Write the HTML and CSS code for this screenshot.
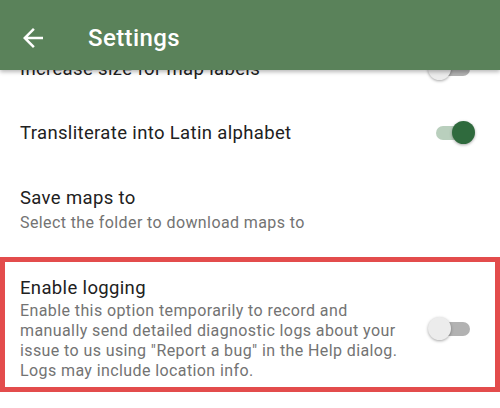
FILE: index.html
```html
<!DOCTYPE html>
<html>
<head>
<meta charset="utf-8">
<link rel="stylesheet" href="styles.css">
</head>
<body>
<header class="appbar">
  <svg class="back" viewBox="0 0 24 24" width="30" height="30"><path fill="#fff" d="M20 11H7.83l5.59-5.59L12 4l-8 8 8 8 1.41-1.41L7.83 13H20v-2z"/></svg>
  <span class="appbar-title">Settings</span>
</header>
<main class="list">
  <div class="row row-single first">
    <div class="text"><div class="title">Increase size for map labels</div></div>
    <div class="switch"><span class="track"></span><span class="thumb"></span></div>
  </div>
  <div class="row row-single">
    <div class="text"><div class="title">Transliterate into Latin alphabet</div></div>
    <div class="switch on"><span class="track"></span><span class="thumb"></span></div>
  </div>
  <div class="row row-double">
    <div class="text">
      <div class="title">Save maps to</div>
      <div class="summary">Select the folder to download maps to</div>
    </div>
  </div>
  <div class="row row-highlight">
    <div class="text">
      <div class="title">Enable logging</div>
      <div class="summary">Enable this option temporarily to record and<br>manually send detailed diagnostic logs about your<br>issue to us using "Report a bug" in the Help dialog.<br>Logs may include location info.</div>
    </div>
    <div class="switch"><span class="track"></span><span class="thumb"></span></div>
  </div>
</main>
</body>
</html>
```
FILE: styles.css
```css
html, body {
  margin: 0;
  padding: 0;
  width: 500px;
  height: 408px;
  overflow: hidden;
  background: #fff;
  font-family: Roboto, "Noto Sans", sans-serif;
}
.appbar {
  position: absolute;
  top: 0;
  left: 0;
  right: 0;
  height: 70px;
  background: #5a825a;
  display: flex;
  align-items: center;
  box-shadow: 0 2px 4px rgba(0,0,0,0.28);
  z-index: 2;
}
.back {
  margin-left: 18px;
  margin-top: 6px;
  flex: none;
}
.appbar-title {
  margin-left: 40px;
  color: #fff;
  font-size: 24px;
  letter-spacing: 0.4px;
  font-weight: 500;
  margin-top: 6px;
}
.list {
  padding-top: 36px;
}
.row {
  display: flex;
  align-items: center;
  padding: 0 25px 0 20px;
}
.row-single {
  height: 64px;
}
.row-single.first {
  height: 65px;
}
.row-double {
  height: 92px;
  box-sizing: border-box;
  padding-bottom: 3px;
}
.text {
  flex: 1;
}
.title {
  font-size: 18.5px;
  letter-spacing: 0.35px;
  line-height: 24px;
  color: #212121;
}
.summary {
  font-size: 16px;
  letter-spacing: 0.4px;
  line-height: 20px;
  color: #737373;
  margin-top: 1px;
}
.row-double .summary {
  margin-top: 3px;
}
.row-highlight {
  border: 5px solid #e34c4c;
  padding: 12px 20px 4px 15px;
  height: 135px;
  box-sizing: border-box;
}
.switch {
  position: relative;
  width: 47px;
  height: 24px;
  flex: none;
}
.track {
  position: absolute;
  left: 8px;
  top: 5px;
  width: 34px;
  height: 14px;
  border-radius: 7px;
  background: #b2b2b2;
}
.thumb {
  position: absolute;
  left: 0;
  top: 0;
  width: 23px;
  height: 23px;
  border-radius: 50%;
  background: #ececec;
  box-shadow: 0 1px 3px rgba(0,0,0,0.35);
}
.switch.on .track {
  background: #b9cfbd;
}
.switch.on .thumb {
  left: 24px;
  background: #2f6a3d;
}
```
